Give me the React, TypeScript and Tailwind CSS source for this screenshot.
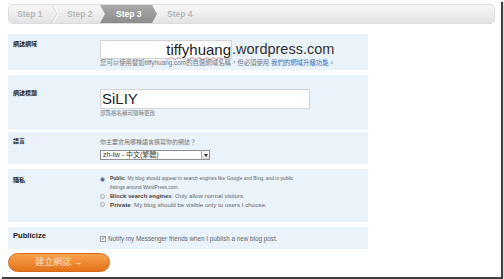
import React from "react";

const FONT = { fontFamily: '"Liberation Sans", Arial, "Noto Sans CJK TC", sans-serif' };

function Radio({ checked }: { checked?: boolean }) {
  return (
    <span className="inline-flex w-[5px] h-[5px] rounded-full border border-[#a8a8a8] bg-gradient-to-b from-[#ffffff] to-[#dcdcdc] items-center justify-center shrink-0">
      {checked && <span className="w-[3px] h-[3px] rounded-full bg-[#3b5f8a]" />}
    </span>
  );
}

export default function App() {
  return (
    <div className="w-[504px] h-[279px] bg-white overflow-hidden" style={FONT}>
      <div className="w-[501px] h-[277px] bg-white shadow-[2px_2px_1px_rgba(0,0,0,0.75)] pl-[8px] pt-[4px] flex flex-col">
        {/* Steps bar */}
        <div className="w-[487px] h-[20px] rounded-[5px] border border-[#dcdcdc] bg-gradient-to-b from-[#f8f8f8] to-[#e3e3e3] flex overflow-hidden text-[8.5px] font-bold">
          <div className="w-[43px] flex items-center pl-[8px] text-[#b8b8b8]">Step 1</div>
          <svg width="6" height="18" className="shrink-0">
            <polyline points="0,0 5,9 0,18" fill="none" stroke="#d2d2d2" strokeWidth="1" />
            <polyline points="1,0 6,9 1,18" fill="none" stroke="#ffffff" strokeWidth="1" />
          </svg>
          <div className="w-[42px] flex items-center pl-[9px] text-[#b8b8b8]">Step 2</div>
          <div className="w-[57px] flex items-center pl-[16px] text-white bg-gradient-to-b from-[#aaaaaa] to-[#8c8c8c] [clip-path:polygon(0_0,52px_0,57px_50%,52px_100%,0_100%,5px_50%)]">
            Step 3
          </div>
          <div className="flex items-center pl-[10px] text-[#b8b8b8]">Step 4</div>
        </div>

        {/* Panel 1: domain */}
        <div className="mt-[10px] w-[360px] h-[36px] bg-[#eaf2fa] flex">
          <div className="w-[92px] pl-[5px] pt-[6px] text-[6px] leading-[8px] font-bold text-[#222]">網誌網域</div>
          <div className="pt-[6px] flex flex-col">
            <div className="flex items-center">
              <div className="w-[132px] h-[19px] bg-white border border-[#d4d4d4] flex items-center justify-end text-[15px] leading-[19px] text-[#222]">
                <span className="underline decoration-wavy decoration-[#eaa0a0] decoration-[1px] underline-offset-1">tiffyhuang</span>
              </div>
              <span className="text-[14.5px] leading-[19px] text-[#333]">.wordpress.com</span>
            </div>
            <div className="text-[6.4px] leading-[8px] text-[#777] whitespace-nowrap">
              <span>您可以使用替如tiffyhuang.com的自選網域名稱，但必須使用 </span>
              <span className="text-[#2f6fb8]">我們的網域升級功能</span>
              <span>。</span>
            </div>
          </div>
        </div>

        {/* Panel 2: title */}
        <div className="mt-[5px] w-[360px] h-[54px] bg-[#eaf2fa] flex">
          <div className="w-[92px] pl-[5px] pt-[14px] text-[6px] leading-[8px] font-bold text-[#222]">網誌標題</div>
          <div className="pt-[14px] flex flex-col">
            <div className="w-[210px] h-[20px] bg-white border border-[#d4d4d4] flex items-center pl-[1px] text-[15px] text-[#222]">SiLIY</div>
            <div className="text-[5.5px] leading-[8px] text-[#777]">部落格名稱可隨時更改</div>
          </div>
        </div>

        {/* Panel 3: language */}
        <div className="mt-[3px] w-[360px] h-[32px] bg-[#eaf2fa] flex">
          <div className="w-[92px] pl-[5px] pt-[5px] text-[6px] leading-[8px] font-bold text-[#222]">語言</div>
          <div className="pt-[6px] flex flex-col">
            <div className="text-[6px] leading-[8px] text-[#777]">你主要會用哪種語言撰寫你的網誌？</div>
            <div className="mt-[4px] w-[110px] h-[10px] bg-white border border-[#8f8f8f] flex items-center justify-between pl-[2px]">
              <span className="text-[7px] leading-[8px] text-[#333] whitespace-nowrap">zh-tw - 中文(繁體)</span>
              <span className="w-[8px] h-[8px] border-l border-[#b0b0b0] bg-gradient-to-b from-[#fafafa] to-[#dedede] flex items-center justify-center">
                <svg width="4" height="3"><polygon points="0,0 4,0 2,3" fill="#333" /></svg>
              </span>
            </div>
          </div>
        </div>

        {/* Panel 4: privacy */}
        <div className="mt-[5px] w-[360px] h-[53px] bg-[#eaf2fa] flex">
          <div className="w-[92px] pl-[5px] pt-[7px] text-[6px] leading-[8px] font-bold text-[#222]">隱私</div>
          <div className="pt-[6px] flex flex-col leading-[8.5px] text-[#666]">
            <div className="flex items-start">
              <div className="h-[8.5px] flex items-center"><Radio checked /></div>
              <div className="ml-[5px] flex flex-col text-[4.9px] whitespace-nowrap">
                <div>
                  <b className="text-[#444]">Public</b>
                  <span>: My blog should appear in search engines like Google and Bing, and in public</span>
                </div>
                <div>listings around WordPress.com.</div>
              </div>
            </div>
            <div className="flex items-center">
              <div className="h-[8.5px] flex items-center"><Radio /></div>
              <div className="ml-[5px] text-[6px] whitespace-nowrap">
                <b className="text-[#444]">Block search engines</b>
                <span>: Only allow normal visitors.</span>
              </div>
            </div>
            <div className="flex items-center">
              <div className="h-[8.5px] flex items-center"><Radio /></div>
              <div className="ml-[5px] text-[6.2px] whitespace-nowrap">
                <b className="text-[#444]">Private</b>
                <span>: My blog should be visible only to users I choose.</span>
              </div>
            </div>
          </div>
        </div>

        {/* Panel 5: publicize */}
        <div className="mt-[5px] w-[360px] h-[22px] bg-[#eaf2fa] flex">
          <div className="w-[92px] pl-[5px] pt-[5px] text-[7.6px] leading-[8px] font-bold text-[#222]">Publicize</div>
          <div className="pt-[5px] flex items-center h-[18px] self-start text-[6.3px] leading-[8px] text-[#666]">
            <span className="w-[6px] h-[6px] border border-[#9a9a9a] bg-white flex items-center justify-center shrink-0">
              <svg width="5" height="5" viewBox="0 0 5 5"><polyline points="0.8,2.4 2,3.8 4.3,0.8" fill="none" stroke="#2a4a6a" strokeWidth="0.9" /></svg>
            </span>
            <span className="ml-[2px] whitespace-nowrap">Notify my Messenger friends when I publish a new blog post.</span>
          </div>
        </div>

        {/* Button */}
        <div className="mt-[4px] w-[102px] h-[19px] rounded-full bg-gradient-to-b from-[#f9a24a] to-[#e4721b] border border-[#d86a18] flex items-center justify-center text-[9px] text-[#fde3c4]">
          建立網誌 →
        </div>
      </div>
    </div>
  );
}
